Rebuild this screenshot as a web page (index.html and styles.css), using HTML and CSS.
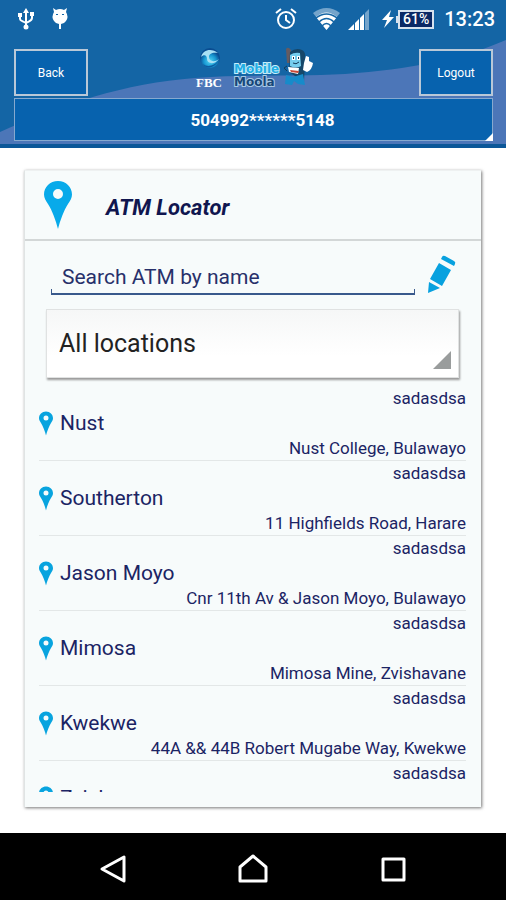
FILE: index.html
```html
<!DOCTYPE html>
<html lang="en">
<head>
<meta charset="utf-8">
<meta name="viewport" content="width=device-width, initial-scale=1">
<title>ATM Locator</title>
<link rel="stylesheet" href="styles.css">
</head>
<body>
<svg class="defs" aria-hidden="true">
  <symbol id="pin" viewBox="0 0 28 48">
    <path fill-rule="evenodd" d="M14 0C6 0 0 6 0 13.500C0 17 2 20 4 23C8 29 12 40 14 48C16 40 20 29 24 23C26 20 28 17 28 13.500C28 6 22 0 14 0ZM14 8A5 5 0 1 1 14 18A5 5 0 0 1 14 8Z"/>
  </symbol>
</svg>
<header class="header">
  <svg class="waves" viewBox="0 0 506 144" preserveAspectRatio="none" aria-hidden="true">
    <path fill="#4c76b8" d="M0 132C60 105 125 83 195 78C245 74 290 77 345 74C410 69 460 60 506 40V144H0Z"/>
  </svg>
  <div class="status">
    <svg width="16" height="22" viewBox="0 0 16 22" fill="none" stroke="#fff" stroke-width="2"><path d="M8 3V19M2 7V11C2 13 5 13 8 15C11 13 14 13 14 10V6"/><path fill="#fff" stroke="none" d="M8 0L11 5H5ZM0 5H4V9H0ZM12 4H16V8H12Z"/><circle cx="8" cy="19" r="2.500" fill="#fff" stroke="none"/></svg>
    <svg class="droid" width="18" height="22" viewBox="0 0 18 22"><path fill="#fff" d="M2 0L5 2Q9 0 13 2L16 0L15 4Q18 9 15 13Q13 16 10 16V21H8V16Q5 16 3 13Q0 9 3 4Z"/><path fill="#1465a5" d="M5 6H7V7H5ZM11 6H13V7H11Z"/></svg>
    <svg class="alarm" width="22" height="22" viewBox="0 0 22 22" fill="none" stroke="#fff" stroke-width="2"><circle cx="11" cy="12" r="8"/><path d="M11 7V12L15 15M1 5L6 1M16 1L21 5"/></svg>
    <svg class="wifi" width="27" height="22" viewBox="0 0 27 22"><path fill="#74a4cb" d="M0 5Q13.500 -5 27 5L13.500 22Z"/><path fill="#fff" d="M3 9Q13.500 0 24 9L13.500 22Z"/><path fill="none" stroke="#1465a5" stroke-width="1.500" d="M3 10Q13.500 2 24 10M6 14Q13.500 7 21 14M9 18Q13.500 13 18 18"/></svg>
    <svg class="signal" width="22" height="21" viewBox="0 0 22 21"><path fill="#fff" d="M0 21L16 5V21Z"/><path fill="#74a4cb" d="M17 4L21 0V21H17Z"/><path stroke="#1465a5" d="M6.500 12V21M11.500 8V21M16.500 3V21"/></svg>
    <svg class="bolt" width="12" height="18" viewBox="0 0 12 18"><path fill="#fff" d="M9 0L0 10H5L2 18L12 7H7Z"/></svg>
    <span class="battery">61%</span>
    <time class="clock">13:23</time>
  </div>
  <div class="toolbar">
    <button class="nav-btn" type="button">Back</button>
    <svg class="brand" width="118" height="44" viewBox="0 0 118 44" role="img" aria-label="FBC Mobile Moola">
      <defs><radialGradient id="orb" cx="0.500" cy="0.650"><stop offset="0" stop-color="#54d6f5"/><stop offset="0.600" stop-color="#1898d2"/><stop offset="1" stop-color="#0a4d92"/></radialGradient></defs>
      <circle cx="15" cy="12" r="10" fill="url(#orb)"/>
      <path fill="#a9e0f5" d="M6 11C8 3 17 2 23 7C17 6 14 8 14 11C14 15 19 17 24 13C20 19 12 18 12 13C12 9 9 8 6 11Z"/>
      <path fill="#0d5b9f" d="M8 18C13 22 20 19 23 15C20 22 11 24 8 18Z"/>
      <text class="fbc" x="1" y="41">FBC</text>
      <text class="mobile" x="39" y="27">Mobile</text>
      <text class="moola" x="39" y="40">Moola</text>
      <path fill="#655b61" d="M91 3Q93 0 96 4V17H92Z"/>
      <path fill="#164769" d="M95 6Q101 1 107 4Q111 6 110 12L109 36L94 26Z"/>
      <path fill="#75cdee" d="M95 9Q99 6 105 7L106 20Q101 23 95 20Z"/>
      <path fill="#fff" d="M97 10H100V14H97ZM102 10H105V14H102ZM93 21L104 22L103 28L94 26ZM109 17L111 10L114 11V15L118 17Q117 24 112 26L108 24Z"/>
      <path stroke="#153a57" fill="none" d="M98.500 11V13M103.500 11V13M98 17Q101 19 104 16M92 20L89 22L92 25"/>
      <path fill="#c94938" d="M95 24L104 25L103 27L96 26Z"/>
      <path fill="#168bca" d="M91 29L98 31L108 28L110 39L103 38L99 35L97 39L90 38Z"/>
    </svg>
    <button class="nav-btn" type="button">Logout</button>
  </div>
  <div class="account">
    <select aria-label="Account"><option>504992******5148</option></select>
    <span class="corner"></span>
  </div>
</header>
<main class="main">
  <section class="card">
    <div class="card-head">
      <svg class="pin-large"><use href="#pin"/></svg>
      <h1>ATM Locator</h1>
    </div>
    <div class="search">
      <input type="text" aria-label="Search ATM by name" placeholder="Search ATM by name">
      <svg width="30" height="40" viewBox="0 0 30 40" fill="#08a1df" aria-hidden="true"><path d="M15 2Q16 0 18 1L27 6Q29 7 28 9L27 11L14 4ZM12 8L24 15L15 31L3 24ZM2 27L13 33L1 38Z"/></svg>
    </div>
    <div class="location">
      <select aria-label="Location"><option>All locations</option></select>
      <span class="corner"></span>
    </div>
    <ul class="list">
      <li><p class="note">sadasdsa</p><h2><svg class="pin"><use href="#pin"/></svg>Nust</h2><p class="addr">Nust College, Bulawayo</p></li>
      <li><p class="note">sadasdsa</p><h2><svg class="pin"><use href="#pin"/></svg>Southerton</h2><p class="addr">11 Highfields Road, Harare</p></li>
      <li><p class="note">sadasdsa</p><h2><svg class="pin"><use href="#pin"/></svg>Jason Moyo</h2><p class="addr">Cnr 11th Av &amp; Jason Moyo, Bulawayo</p></li>
      <li><p class="note">sadasdsa</p><h2><svg class="pin"><use href="#pin"/></svg>Mimosa</h2><p class="addr">Mimosa Mine, Zvishavane</p></li>
      <li><p class="note">sadasdsa</p><h2><svg class="pin"><use href="#pin"/></svg>Kwekwe</h2><p class="addr">44A &amp;&amp; 44B Robert Mugabe Way, Kwekwe</p></li>
      <li><p class="note">sadasdsa</p><h2><svg class="pin"><use href="#pin"/></svg>Zvish</h2></li>
    </ul>
  </section>
</main>
<nav class="sysnav">
  <button type="button" aria-label="Back"><svg width="30" height="30" viewBox="0 0 30 30"><path d="M26 3V27L4 15Z"/></svg></button>
  <button type="button" aria-label="Home"><svg width="30" height="30" viewBox="0 0 30 30"><path d="M2 27V13L15 2L28 13V27Z"/></svg></button>
  <button type="button" aria-label="Recent apps"><svg width="30" height="30" viewBox="0 0 30 30"><path d="M5 5H26V26H5Z"/></svg></button>
</nav>
</body>
</html>
```
FILE: styles.css
```css
* {
  box-sizing: border-box;
}

body {
  margin: 0;
  height: 100vh;
  display: flex;
  flex-direction: column;
  background: #fff;
  color: #1b2464;
  font-family: Roboto, "Liberation Sans", sans-serif;
}

h1, h2, p, ul {
  margin: 0;
  padding: 0;
}

button, input, select {
  font-family: inherit;
  border-radius: 0;
  outline: none;
}

select {
  appearance: none;
  width: 100%;
}

.defs {
  position: absolute;
  width: 0;
  height: 0;
}

.header {
  position: relative;
  background: #1465a5;
  border-bottom: 4px solid #0b5798;
  padding-bottom: 3px;
}

.waves {
  position: absolute;
  inset: 0;
  width: 100%;
  height: 100%;
}

.status {
  position: relative;
  display: flex;
  align-items: center;
  height: 38px;
  padding: 0 11px 0 18px;
  color: #fff;
}

.droid {
  margin-left: 17px;
}

.alarm {
  margin-left: auto;
}

.wifi {
  margin-left: 16px;
}

.signal {
  margin-left: 8px;
}

.bolt {
  margin-left: 12px;
}

.battery {
  position: relative;
  margin-left: 4px;
  padding: 0 3px;
  border: 2px solid #d7e2ee;
  background: #0a2865;
  font-size: 14px;
  line-height: 15px;
  font-weight: 500;
}

.battery::before {
  content: "";
  position: absolute;
  left: -4px;
  top: 4px;
  width: 3px;
  height: 7px;
  background: #d7e2ee;
}

.clock {
  margin-left: 10px;
  font-size: 20px;
  font-weight: 500;
}

.toolbar {
  position: relative;
  display: flex;
  justify-content: space-between;
  align-items: flex-end;
  height: 58px;
  padding: 0 13px 0 14px;
}

.nav-btn {
  width: 74px;
  height: 47px;
  padding: 0;
  border: 2px solid #b9c8d8;
  background: #0762ae;
  color: #fff;
  font-size: 12px;
}

.brand {
  align-self: center;
  margin-top: 2px;
}

.fbc {
  font: bold 13px "Liberation Serif", serif;
  fill: #fff;
}

.mobile, .moola {
  font: bold 12px "DejaVu Sans", sans-serif;
  paint-order: stroke;
  stroke-width: 2px;
}

.mobile {
  fill: #22aee5;
  stroke: #c9edfa;
}

.moola {
  fill: #174778;
  stroke: #a7c9e5;
}

.account {
  position: relative;
  margin: 2px 13px 0 14px;
}

.account select {
  display: block;
  height: 43px;
  padding: 0 0 0 18px;
  border: 1px solid #86a9cf;
  background: #0762ae;
  color: #fff;
  font-size: 17px;
  font-weight: 700;
  text-align: center;
  text-align-last: center;
}

.corner {
  position: absolute;
  right: 0;
  bottom: 0;
  width: 8px;
  height: 8px;
  background: #fff;
  clip-path: polygon(100% 0, 100% 100%, 0 100%);
  pointer-events: none;
}

.main {
  flex: 1;
  min-height: 0;
  display: flex;
  padding: 22px 25px 26px 24px;
}

.card {
  flex: 1;
  min-width: 0;
  display: flex;
  flex-direction: column;
  padding-bottom: 15px;
  background: #f7fbfb;
  border-left: 1px solid #e0e4e4;
  border-top: 1px solid #eef1f1;
  box-shadow: 1px 1px 3px #777;
}

.card-head {
  display: flex;
  align-items: center;
  gap: 34px;
  height: 70px;
  flex: none;
  padding-left: 19px;
  border-bottom: 2px solid #d3d7d7;
}

.pin-large {
  width: 28px;
  height: 48px;
  fill: #08aaea;
}

h1 {
  padding-top: 4px;
  font-size: 22px;
  font-weight: 700;
  font-style: italic;
  color: #10164f;
}

.search {
  display: flex;
  align-items: flex-end;
  gap: 12px;
  height: 54px;
  flex: none;
  padding: 0 24px 0 26px;
}

.search input {
  flex: 1;
  min-width: 0;
  height: 36px;
  padding: 0 11px;
  border: 0;
  background:
    linear-gradient(#39598c, #39598c) left bottom / 1px 6px no-repeat,
    linear-gradient(#39598c, #39598c) right bottom / 1px 6px no-repeat,
    linear-gradient(#39598c, #39598c) left bottom / 100% 2px no-repeat;
  font-size: 21px;
  color: #1b2464;
}

.search input::placeholder {
  color: #27306a;
  opacity: 1;
}

.location {
  position: relative;
  flex: none;
  margin: 14px 22px 0 21px;
}

.location select {
  display: block;
  height: 69px;
  padding: 0 12px;
  border: 1px solid #e0e2e2;
  background: linear-gradient(#f6f7f7, #fff 70%);
  box-shadow: 1px 2px 2px #999;
  color: #222;
  font-size: 25px;
}

.location .corner {
  right: 8px;
  bottom: 9px;
  width: 18px;
  height: 18px;
  background: #999c9c;
}

.list {
  flex: 1;
  min-height: 0;
  overflow: hidden;
  list-style: none;
  margin: 8px 15px 0 14px;
}

.list li {
  height: 75px;
  border-bottom: 1px solid #e3e7e7;
}

.list p {
  height: 24px;
  font-size: 17px;
  line-height: 24px;
  text-align: right;
}

.list h2 {
  display: flex;
  align-items: center;
  gap: 7px;
  height: 26px;
  font-size: 21px;
  font-weight: 400;
}

.pin {
  width: 14px;
  height: 25px;
  fill: #08a4df;
}

.sysnav {
  display: flex;
  justify-content: center;
  align-items: center;
  gap: 110px;
  height: 67px;
  flex: none;
  padding-top: 4px;
  background: #000;
}

.sysnav button {
  display: flex;
  padding: 0;
  border: 0;
  background: none;
}

.sysnav path {
  fill: none;
  stroke: #fff;
  stroke-width: 3;
  stroke-linejoin: round;
}
```
